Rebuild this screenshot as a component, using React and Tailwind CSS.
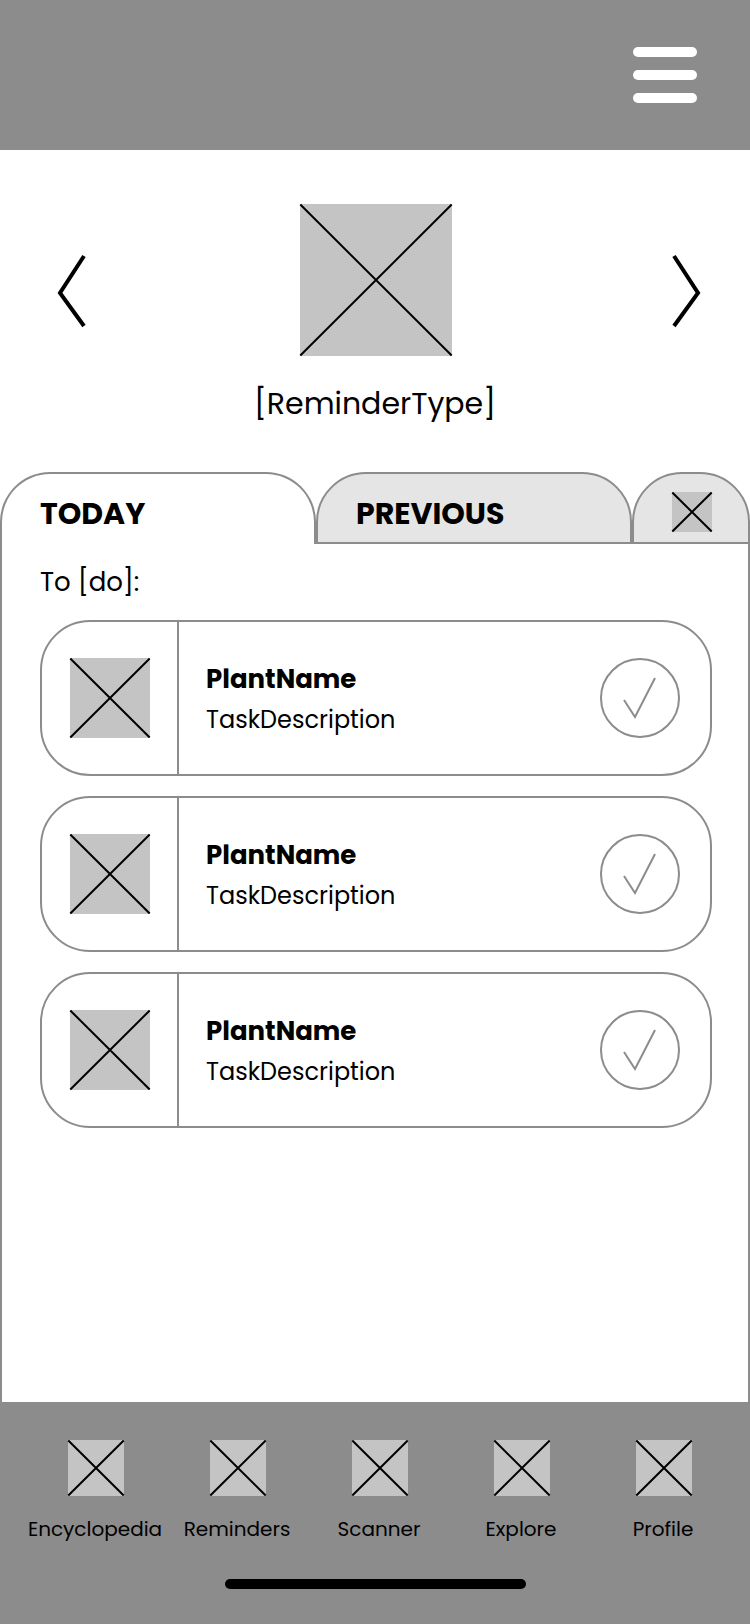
const NAV_ITEMS = ["Encyclopedia", "Reminders", "Scanner", "Explore", "Profile"];

const TASKS = [
  { id: 1, name: "PlantName", description: "TaskDescription" },
  { id: 2, name: "PlantName", description: "TaskDescription" },
  { id: 3, name: "PlantName", description: "TaskDescription" },
];

function Placeholder({ size, className }) {
  return (
    <svg
      className={`block shrink-0 overflow-visible bg-[#c4c4c4] ${className}`}
      viewBox={`0 0 ${size} ${size}`}
      fill="none"
      stroke="#000"
      strokeWidth="2"
      aria-hidden="true"
    >
      <path d={`M0.3 0.5L${size - 0.3} ${size - 0.5}M${size - 0.3} 0.5L0.3 ${size - 0.5}`} />
    </svg>
  );
}

function Arrow({ label, d }) {
  return (
    <button type="button" aria-label={label} className="mb-[26px] shrink-0">
      <svg className="block h-[78px] w-[38px]" viewBox="0 0 38 78" fill="none" stroke="#000" strokeWidth="4">
        <path d={d} />
      </svg>
    </button>
  );
}

function TaskCard({ task }) {
  const inputId = `task-${task.id}`;
  return (
    <li className="flex h-[156px] items-center rounded-[50px] border-2 border-[#8c8c8c]">
      <div className="flex h-full items-center border-r-2 border-[#8c8c8c] pr-[27px] pl-7">
        <Placeholder size={80} className="size-20" />
      </div>
      <label htmlFor={inputId} className="flex flex-1 flex-col gap-px pt-[3px] pl-[27px]">
        <span className="text-[26px] leading-10 font-bold">{task.name}</span>
        <span className="text-[24px] leading-10">{task.description}</span>
      </label>
      <span className="mr-[30px] grid size-20 shrink-0">
        <input
          id={inputId}
          type="checkbox"
          className="col-start-1 row-start-1 size-20 appearance-none rounded-full border-2 border-[#8c8c8c] checked:bg-[#e5e5e5]"
        />
        <svg
          className="pointer-events-none col-start-1 row-start-1 size-20"
          viewBox="0 0 80 80"
          fill="none"
          stroke="#8c8c8c"
          strokeWidth="2"
          aria-hidden="true"
        >
          <path d="M24 42L35 59L55 20" />
        </svg>
      </span>
    </li>
  );
}

export default function App() {
  return (
    <div className="flex min-h-screen flex-col bg-white font-[Poppins,Inter,sans-serif] text-black">
      <header className="flex h-[150px] items-center justify-end bg-[#8c8c8c] pr-[53px]">
        <button type="button" aria-label="Open menu" className="flex w-16 flex-col gap-[13px]">
          <span className="h-[10px] w-full rounded-full bg-white" />
          <span className="h-[10px] w-full rounded-full bg-white" />
          <span className="h-[10px] w-full rounded-full bg-white" />
        </button>
      </header>

      <main className="flex flex-1 flex-col">
        <section className="pt-[54px] pb-[44px]">
          <div className="flex items-end justify-between pr-12 pl-[50px]">
            <Arrow label="Previous reminder type" d="M34 4L10 41L34 74" />
            <Placeholder size={152} className="size-[152px]" />
            <Arrow label="Next reminder type" d="M10 4L34 41L10 74" />
          </div>
          <h1 className="mt-6 text-center text-[30px] leading-[48px]">[ReminderType]</h1>
        </section>

        <div role="tablist" className="grid h-[72px] grid-cols-[1fr_1fr_118px]">
          <button
            type="button"
            role="tab"
            aria-selected="true"
            className="rounded-t-[50px] border-2 border-b-0 border-[#8c8c8c] pt-[10px] pb-[2px] pl-[38px] text-left text-[30px] font-bold"
          >
            TODAY
          </button>
          <button
            type="button"
            role="tab"
            aria-selected="false"
            className="rounded-t-[50px] border-2 border-[#8c8c8c] bg-[#e5e5e5] pt-[10px] pl-[38px] text-left text-[30px] font-bold"
          >
            PREVIOUS
          </button>
          <button
            type="button"
            role="tab"
            aria-selected="false"
            aria-label="More"
            className="flex items-center justify-center rounded-t-[50px] border-2 border-[#8c8c8c] bg-[#e5e5e5] pt-2 pl-[2px]"
          >
            <Placeholder size={40} className="size-10" />
          </button>
        </div>

        <section className="flex-1 border-x-2 border-[#8c8c8c] pt-[18px] pr-9 pb-10 pl-[38px]">
          <h2 className="text-[26px] leading-10">To [do]:</h2>
          <ul className="mt-[18px] flex flex-col gap-5">
            {TASKS.map((task) => (
              <TaskCard key={task.id} task={task} />
            ))}
          </ul>
        </section>
      </main>

      <footer className="flex h-[222px] flex-col items-center bg-[#8c8c8c] pt-[38px]">
        <nav className="grid w-full grid-cols-5 pr-[15px] pl-[25px]">
          {NAV_ITEMS.map((item) => (
            <a key={item} href={`#${item.toLowerCase()}`} className="flex flex-col items-center">
              <Placeholder size={56} className="size-14" />
              <span className="mt-[17px] pr-[2px] text-[20px] leading-8">{item}</span>
            </a>
          ))}
        </nav>
        <div className="mt-[34px] h-[10px] w-[301px] rounded-full bg-black" />
      </footer>
    </div>
  );
}
